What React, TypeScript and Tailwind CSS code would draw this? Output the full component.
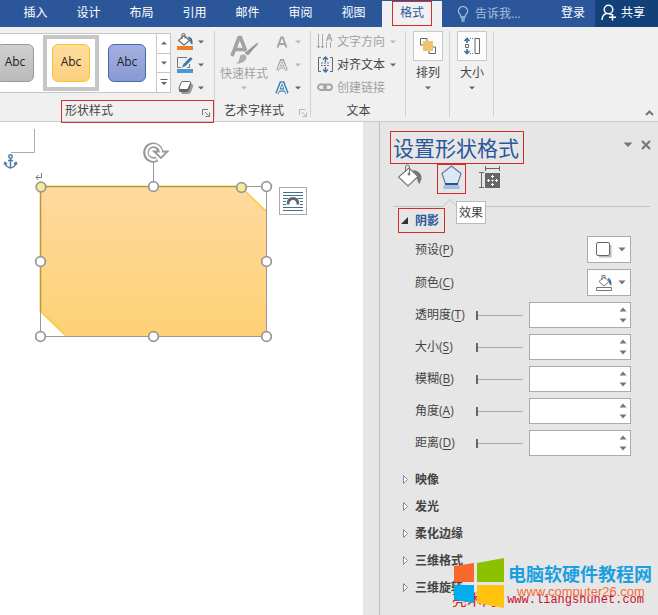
import { useState } from "react";
import type { ReactNode } from "react";

const menuTabs = ["插入", "设计", "布局", "引用", "邮件", "审阅", "视图"];

const sliderRows = [
  { id: "transparency", name: "透明度", hotkey: "T" },
  { id: "size", name: "大小", hotkey: "S" },
  { id: "blur", name: "模糊", hotkey: "B" },
  { id: "angle", name: "角度", hotkey: "A" },
  { id: "distance", name: "距离", hotkey: "D" },
];

const collapsedSections = ["映像", "发光", "柔化边缘", "三维格式", "三维旋转"];

function Caret({ className = "text-[#666666]" }: { className?: string }) {
  return (
    <svg width="6" height="4" viewBox="0 0 6 4" className={`shrink-0 ${className}`} aria-hidden="true">
      <path d="M0 0.500h6L3 3.500z" fill="currentColor" />
    </svg>
  );
}

function SpinArrow({ up = false }: { up?: boolean }) {
  return (
    <svg width="8" height="5" viewBox="0 0 8 5" className="shrink-0 text-[#777]" aria-hidden="true">
      <path d={up ? "M0.500 4.500h7L4 0.500z" : "M0.500 0.500h7L4 4.500z"} fill="currentColor" />
    </svg>
  );
}

function Launcher({ className }: { className: string }) {
  return (
    <svg width="8" height="8" viewBox="0 0 8 8" className={className} fill="none" stroke="currentColor" aria-hidden="true">
      <path d="M0.500 6V0.500H6M3 3l3.500 3.500M7.500 3.500v4h-4" />
    </svg>
  );
}

function BucketIcon({ bar }: { bar: string }) {
  return (
    <svg width="18" height="17" viewBox="0 0 18 17" fill="none" aria-hidden="true">
      <path d="M8 2.500l5.500 5-5.500 4.500L2.500 7.500z" fill="#fff" stroke="#666" strokeWidth="1.100" />
      <path d="M6 6V1.500q0-1 1.500-1T9 1.500v4" stroke="#666" />
      <path d="M11.500 3.500q5 0.500 5 5v3q-2.500-0.500-2.500-4z" fill="#44719c" />
      <path d="M1 13h16v4H1z" fill={bar} />
    </svg>
  );
}

function PencilIcon() {
  return (
    <svg width="18" height="17" viewBox="0 0 18 17" fill="none" aria-hidden="true">
      <path d="M11 1.500H1.500v10H5M13.500 8v3.500H11" stroke="#777" />
      <path d="M14.500 1l2 2-7 7-3.500 1.500L7.500 8z" fill="#3f76ad" />
      <path d="M1 13h16v4H1z" fill="#4a98d3" />
    </svg>
  );
}

function EffectIcon() {
  return (
    <svg width="17" height="15" viewBox="0 0 17 15" fill="none" aria-hidden="true">
      <path d="M3 10l2 4h6q2 0 3-2l2-5q0.500-3-2-4z" fill="#9a9a9a" />
      <path d="M6 1.500h6.500q1.500 0 1 1.500L11.500 8q-0.500 1.500-2 1.500H3q-1.500 0-1-1.500L4 3q0.500-1.500 2-1.500z" fill="#fff" stroke="#666" />
      <path d="M2 8.500q0 1 1.500 1h6q2 0 2.500-1.500L13.800 3v2.500L12 10q-0.500 2-2.500 2h-6Q2 12 2 10.500z" fill="#666" />
    </svg>
  );
}

function LetterIcon({ kind }: { kind: "solid" | "outline" | "glow" }) {
  if (kind === "glow") {
    return (
      <svg width="14" height="14" viewBox="0 0 14 14" fill="none" aria-hidden="true">
        <path d="M2 12.500L6 2h2l4 10.500M4 9h6" stroke="#9bd0ee" strokeWidth="4" />
        <path d="M2 12.500L6 2h2l4 10.500M4 9h6" stroke="#35709b" strokeWidth="3" />
        <path d="M2.300 12.500L6.300 2h1.400l4 10.500M4 9h6" stroke="#fff" strokeWidth="1.200" />
      </svg>
    );
  }
  return (
    <svg width="12" height="12" viewBox="0 0 12 12" fill="none" aria-hidden="true">
      <path d="M1.500 11.500L5.200 1.500h1.600l3.700 10M3 8h6" stroke="#a3a3a3" strokeWidth={kind === "solid" ? 1.9 : 2.8} />
      {kind === "outline" && <path d="M1.600 11L5.500 2h1l3.900 9M3 8h6" stroke="#f5f5f5" strokeWidth="1" />}
    </svg>
  );
}

function QuickStyleIcon() {
  return (
    <svg width="30" height="31" viewBox="0 0 30 31" fill="none" aria-hidden="true">
      <path d="M3 21L10 2.500h1.500L18 19M6 14.500h10" stroke="#a3a3a3" strokeWidth="3.600" />
      <path d="M28.500 7l1 2L19 21l-4-3z" fill="#999" stroke="#f0f0f0" strokeWidth="1" />
      <path d="M13 19q5-0.500 5 4-2 6-12 6.500 4-3 4-6 0-4 3-4.500z" fill="#adadad" stroke="#f0f0f0" />
    </svg>
  );
}

function TextDirectionIcon() {
  return (
    <svg width="17" height="17" viewBox="0 0 17 17" fill="none" stroke="#aaa" aria-hidden="true">
      <path d="M1.500 1v14M5.500 1v14M9.500 9v6M13.500 9v6" />
      <path d="M9.500 8L12 1.500h0.500L15 8M10.500 5.500h4" strokeWidth="1.400" />
      <path d="M0 13l1.500 2L3 13M4 13l1.500 2L7 13" />
    </svg>
  );
}

function AlignTextIcon() {
  return (
    <svg width="17" height="17" viewBox="0 0 17 17" fill="none" aria-hidden="true">
      <path d="M4 1.500H1.500v14H4M13 1.500h2.500v14H13" stroke="#666" />
      <path d="M4 7h9M4 9.500h9" stroke="#777" strokeDasharray="2 1" />
      <path d="M8.500 1v5M8.500 11v5M6 3.500L8.500 1 11 3.500M6 13.500L8.500 16l2.500-2.500" stroke="#3972a5" strokeWidth="1.400" />
    </svg>
  );
}

function LinkIcon() {
  return (
    <svg width="17" height="9" viewBox="0 0 17 9" fill="none" stroke="#a3a3a3" strokeWidth="1.800" aria-hidden="true">
      <rect x="1" y="1.500" width="8" height="5.500" rx="2.700" />
      <rect x="7" y="1.500" width="8" height="5.500" rx="2.700" />
    </svg>
  );
}

function ArrangeIcon() {
  return (
    <svg width="18" height="18" viewBox="0 0 18 18" fill="none" aria-hidden="true">
      <path d="M8 1.500H1.500V8M4 8H1.500M8 1.500V4M10 16.500h6.500V10M14 10h2.500M10 14v2.500" stroke="#666" />
      <path d="M4 4h10v10H4z" fill="#f0c36d" />
    </svg>
  );
}

function SizeIcon() {
  return (
    <svg width="18" height="18" viewBox="0 0 18 18" fill="none" aria-hidden="true">
      <path d="M12 1.500h4.500v15H12z" stroke="#666" />
      <path d="M2.500 7.500h3v3h-3z" stroke="#666" />
      <path d="M7 1.500h4M7 16.500h4" stroke="#777" strokeDasharray="1 1" />
      <path d="M4 1v5M4 12v5M1.500 4L4 1.500 6.500 4M1.500 14L4 16.500 6.500 14" stroke="#3972a5" strokeWidth="1.600" />
    </svg>
  );
}

function SplitTool({ label, icon, faded = false }: { label: string; icon: ReactNode; faded?: boolean }) {
  return (
    <button type="button" aria-label={label} className="flex h-[23px] items-center gap-[3px]">
      <span className="flex w-5 justify-center">{icon}</span>
      <Caret className={faded ? "text-[#b8b8b8]" : "text-[#666666]"} />
    </button>
  );
}

function StyleTile({ label, selected = false, className }: { label: string; selected?: boolean; className: string }) {
  return (
    <button
      type="button"
      aria-label={label}
      className={`flex size-14 shrink-0 items-center justify-center border-4 ${selected ? "border-[#c6c6c6] bg-white" : "border-transparent"}`}
    >
      <span className={`flex h-[38px] w-[38px] items-center justify-center rounded-[6px] border pb-[2px] text-[12px] leading-4 text-[#222] ${className}`}>
        Abc
      </span>
    </button>
  );
}

function MenuBar() {
  return (
    <nav className="flex h-[27px] items-stretch bg-[#2b579a] text-white">
      <div className="flex pl-[9px]">
        {menuTabs.map((tab) => (
          <button key={tab} type="button" className="w-[53px] pb-[2px]">
            {tab}
          </button>
        ))}
      </div>
      <button type="button" className="mt-px ml-[2px] flex w-[60px] justify-center bg-[#f0f0f0] text-[#2b579a]">
        <span className="flex h-[25px] w-10 items-center justify-center border border-[#d42a2a] pb-[2px]">格式</span>
      </button>
      <button type="button" className="ml-[15px] flex items-center gap-[6px] text-[#a9bedc]">
        <svg width="12" height="16" viewBox="0 0 12 16" fill="none" stroke="currentColor" strokeWidth="1.300" aria-hidden="true">
          <path d="M4 11q0-2-1.500-3.200A4.500 4.500 0 1 1 9.500 7.800Q8 9 8 11zM4 13h4M4.500 15h3" />
        </svg>
        告诉我...
      </button>
      <button type="button" className="ml-auto px-[10px] pb-[2px]">
        登录
      </button>
      <button type="button" className="flex w-[63px] items-center gap-[4px] bg-[#124078] pb-[2px] pl-[6px]">
        <svg width="16" height="17" viewBox="0 0 16 17" fill="none" stroke="currentColor" strokeWidth="1.500" aria-hidden="true">
          <circle cx="7.500" cy="5.500" r="4.300" />
          <path d="M1 16q0-5 4.500-6.500M8.500 9.500l2 1.500M11.500 10v6.500M8 13.300h7" />
        </svg>
        共享
      </button>
    </nav>
  );
}

function Group({ children, label, className = "" }: { children: ReactNode; label?: ReactNode; className?: string }) {
  return (
    <section className={`relative flex shrink-0 flex-col pt-[3px] after:absolute after:top-1 after:right-0 after:bottom-1 after:w-px after:bg-[#d2d2d2] ${className}`}>
      <div className="flex h-[69px]">{children}</div>
      <div className="mt-px flex h-[21px] items-center">{label}</div>
    </section>
  );
}

function LargeTool({ label, icon }: { label: string; icon: ReactNode }) {
  return (
    <button type="button" className="mt-px flex w-full flex-col items-center">
      <span className="flex size-[30px] items-center justify-center border border-[#c9c9c9] bg-[#fcfcfc]">{icon}</span>
      <span className="mt-1 leading-4">{label}</span>
      <Caret className="mt-[5px] text-[#666666]" />
    </button>
  );
}

function Ribbon() {
  return (
    <div className="flex border-b border-[#cacaca] bg-[#f0f0f0] text-[#444]">
      <Group
        className="w-[215px]"
        label={
          <div className="relative z-10 mt-[2px] ml-[61px] flex h-[23px] w-[153px] shrink-0 items-center justify-between border border-[#cf3030] px-[3px] pb-px">
            <span>形状样式</span>
            <button type="button" aria-label="形状样式设置" className="mt-1">
              <Launcher className="text-[#777]" />
            </button>
          </div>
        }
      >
        <div className="mt-[3px] flex h-[60px] w-[171px] border border-l-0 border-[#c6c6c6] bg-white">
          <div className="flex w-[156px] items-center overflow-hidden">
            <div className="-ml-[13px] flex">
              <StyleTile label="灰色样式" className="border-[#999] bg-linear-to-b from-[#d0d0d0] to-[#bababa]" />
              <StyleTile label="金色样式" selected className="border-[#f8c52c] bg-linear-to-b from-[#ffdc9e] to-[#fdd080]" />
              <StyleTile label="蓝色样式" className="border-[#4169b8] bg-linear-to-b from-[#a3b1df] to-[#8899d4]" />
            </div>
          </div>
          <div className="flex flex-1 flex-col divide-y divide-[#c6c6c6] border-l border-[#c6c6c6] text-[#666]">
            <button type="button" aria-label="上一行" className="flex flex-1 items-center justify-center">
              <Caret className="rotate-180 text-[#666666]" />
            </button>
            <button type="button" aria-label="下一行" className="flex flex-1 items-center justify-center">
              <Caret />
            </button>
            <button type="button" aria-label="其他" className="flex flex-1 items-center justify-center">
              <svg width="8" height="7" viewBox="0 0 8 7" aria-hidden="true">
                <path d="M0.500 0h7v1h-7zM1 3h6L4 6z" fill="currentColor" />
              </svg>
            </button>
          </div>
        </div>
        <div className="ml-[4px] flex flex-col">
          <SplitTool label="形状填充" icon={<BucketIcon bar="#e97d2f" />} />
          <SplitTool label="形状轮廓" icon={<PencilIcon />} />
          <SplitTool label="形状效果" icon={<EffectIcon />} />
        </div>
      </Group>

      <Group
        className="w-24"
        label={
          <div className="flex flex-1 items-center justify-between pr-[4px] pl-[9px]">
            <span>艺术字样式</span>
            <button type="button" aria-label="艺术字样式设置" className="mt-1">
              <Launcher className="text-[#b5b5b5]" />
            </button>
          </div>
        }
      >
        <button type="button" className="ml-[5px] flex w-12 flex-col items-center pt-[5px] text-[#a0a0a0]">
          <QuickStyleIcon />
          <span className="leading-4">快速样式</span>
          <Caret className="mt-1 text-[#b8b8b8]" />
        </button>
        <div className="ml-1 flex flex-col">
          <SplitTool label="文本填充" faded icon={<LetterIcon kind="solid" />} />
          <SplitTool label="文本轮廓" faded icon={<LetterIcon kind="outline" />} />
          <SplitTool label="文本效果" icon={<LetterIcon kind="glow" />} />
        </div>
      </Group>

      <Group className="w-[95px]" label={<span className="flex-1 text-center">文本</span>}>
        <div className="ml-[6px] flex flex-col">
          <button type="button" className="flex h-[23px] items-center gap-[3px] text-[#a0a0a0]">
            <TextDirectionIcon />
            文字方向
            <Caret className="ml-[2px] text-[#b8b8b8]" />
          </button>
          <button type="button" className="flex h-[23px] items-center gap-[3px]">
            <AlignTextIcon />
            对齐文本
            <Caret className="ml-[2px] text-[#666666]" />
          </button>
          <button type="button" className="flex h-[23px] items-center gap-[3px] text-[#a0a0a0]">
            <LinkIcon />
            创建链接
          </button>
        </div>
      </Group>

      <Group className="w-11">
        <LargeTool label="排列" icon={<ArrangeIcon />} />
      </Group>
      <Group className="w-11">
        <LargeTool label="大小" icon={<SizeIcon />} />
      </Group>

      <button type="button" aria-label="折叠功能区" className="mr-1 mb-[5px] ml-auto self-end">
        <svg width="9" height="6" viewBox="0 0 9 6" fill="none" stroke="#777" strokeWidth="2" aria-hidden="true">
          <path d="M1 5l3.500-3.500L8 5" />
        </svg>
      </button>
    </div>
  );
}

const handles = [
  [153, 64],
  [266, 64],
  [40, 139],
  [266, 139],
  [40, 214],
  [153, 214],
  [266, 214],
];

function DocumentCanvas() {
  return (
    <main className="relative min-w-0 flex-1 overflow-hidden bg-white">
      <svg width="320" height="240" viewBox="0 0 320 240" fill="none" role="img" aria-label="剪去对角的矩形">
        <defs>
          <linearGradient id="gold" x1="0" y1="0" x2="0" y2="1">
            <stop offset="0" stopColor="#ffd99f" />
            <stop offset="1" stopColor="#fed175" />
          </linearGradient>
        </defs>
        <path d="M34.500 7v23.500H11" stroke="#aaa" />
        <g stroke="#4d7da6" strokeWidth="1.500">
          <circle cx="10.500" cy="34.500" r="1.700" />
          <path d="M10.500 36v10M8 38.500h5M5 40.500q0.500 4.500 5.500 5.500 5-1 5.500-5.500M4 42.500l1-2 2 1.500M14 42l2-1.500 1 2" />
        </g>
        <path d="M41.500 51v4.500h-5.500M38.500 53L36 55.500l2.500 2.500" stroke="#777" />
        <path d="M41 65h200l26 25v124H66l-25-24z" fill="url(#gold)" />
        <path d="M241 65l26 25M41 190l25 24" stroke="#f6cd3c" strokeWidth="1.500" />
        <path d="M40.500 64.500h226v150h-226zM153.500 64V40" stroke="#999" />
        <path d="M40.500 190V64.500H241" stroke="#b69a2b" strokeWidth="1.500" />
        <path d="M160.500 30A7.300 7.300 0 1 0 157 36.800" stroke="#999" strokeWidth="5.600" />
        <path d="M154 29.500h13.500L161 36z" fill="#fff" stroke="#999" strokeWidth="1.800" />
        <path d="M161 31A7.300 7.300 0 1 0 156.500 37.200" stroke="#fff" strokeWidth="2.200" />
        {handles.map(([x, y]) => (
          <circle key={`${x}-${y}`} cx={x + 0.5} cy={y + 0.5} r="4.800" fill="#fff" stroke="#999" strokeWidth="1.800" />
        ))}
        <circle cx="41" cy="65" r="4.800" fill="#f9eb93" stroke="#999" strokeWidth="1.800" />
        <circle cx="241.500" cy="65.500" r="4.800" fill="#f9eb93" stroke="#999" strokeWidth="1.800" />
      </svg>
      <button
        type="button"
        aria-label="布局选项"
        className="absolute top-[65px] left-[279px] flex size-7 items-center justify-center border border-[#aaa] bg-white"
      >
        <svg width="20" height="20" viewBox="0 0 20 20" fill="none" aria-hidden="true">
          <path d="M0 1.500h20M0 4.500h20M0 7.500h5M15 7.500h5M0 10.500h3M17 10.500h3M0 13.500h3M17 13.500h3M0 16.500h20M0 19.500h20" stroke="#43728f" />
          <path d="M5 13.500q0-6 5-6t5 6" stroke="#666" strokeWidth="2.800" />
        </svg>
      </button>
    </main>
  );
}

function PaneTabs() {
  return (
    <div className="flex h-[30px] items-start">
      <button type="button" aria-label="填充与线条" className="ml-[5px]">
        <svg width="26" height="26" viewBox="0 0 26 26" fill="none" aria-hidden="true">
          <path d="M16 6q8 2 7.500 9l-2 5q-2.500-2-2.500-7l-5-5z" fill="#777" />
          <path d="M11 4l9 8.500-10 9.500-9.500-9z" fill="#fff" stroke="#777" strokeWidth="1.200" />
          <path d="M7.500 8V3q0-2 2-2t2 2v6" stroke="#777" />
          <circle cx="11" cy="10" r="1.500" fill="#777" />
        </svg>
      </button>
      <button type="button" aria-label="效果" className="ml-[13px] flex h-[30px] w-[29px] items-start justify-center border border-[#d42a2a]">
        <svg width="23" height="26" viewBox="0 0 23 26" fill="none" aria-hidden="true">
          <path d="M4 20h15l1 4H3z" fill="#a6bedf" />
          <path d="M11.500 1l9.500 7.500-3.500 10.500h-12L2 8.500z" fill="#dbe8f8" stroke="#647b9d" strokeWidth="1.200" />
          <path d="M5 19h13" stroke="#29548c" strokeWidth="2" />
        </svg>
      </button>
      <button type="button" aria-label="布局属性" className="mt-[2px] ml-[13px]">
        <svg width="21" height="23" viewBox="0 0 21 23" fill="none" aria-hidden="true">
          <path d="M0 6.500h5M2.500 7v14M0 21.500h5M6 2.500h15M6.500 0v5M20.500 0v5" stroke="#666" />
          <path d="M6 7h15v15H6z" fill="#666" />
          <path d="M13.500 9v3M13.500 17v3M8 14.500h3M16 14.500h3M13.500 13.500v2M12.500 14.500h2M12 11l1.500-1.500L15 11M12 18l1.500 1.500L15 18M10 13l-1.500 1.500L10 16M17 13l1.500 1.500L17 16" stroke="#fff" />
        </svg>
      </button>
    </div>
  );
}

function SliderRow({ id, name, hotkey }: { id: string; name: string; hotkey: string }) {
  const [value, setValue] = useState("");
  const step = (delta: number) => setValue(String(Math.min(100, Math.max(0, Number(value || 0) + delta))));
  return (
    <div className="flex h-8 items-center">
      <label htmlFor={id} className="w-[61px]">
        {name}(<u className="underline-offset-2">{hotkey}</u>)
      </label>
      <input
        type="range"
        aria-label={name}
        min={0}
        max={100}
        value={Number(value || 0)}
        onChange={(e) => setValue(e.target.value)}
        className="h-3 w-[47px] appearance-none bg-[linear-gradient(#aaa,#aaa)] bg-[length:100%_1px] bg-center bg-no-repeat [&::-webkit-slider-thumb]:h-[9px] [&::-webkit-slider-thumb]:w-[2px] [&::-webkit-slider-thumb]:appearance-none [&::-webkit-slider-thumb]:bg-[#666]"
      />
      <div className="ml-auto flex h-[26px] w-[102px] border border-[#ababab] bg-white">
        <input
          id={id}
          type="text"
          value={value}
          onChange={(e) => setValue(e.target.value)}
          className="min-w-0 flex-1 bg-transparent px-1 outline-none"
        />
        <div className="flex w-[14px] flex-col py-px">
          <button type="button" aria-label={`增大${name}`} onClick={() => step(1)} className="flex flex-1 items-center justify-center">
            <SpinArrow up />
          </button>
          <button type="button" aria-label={`减小${name}`} onClick={() => step(-1)} className="flex flex-1 items-center justify-center">
            <SpinArrow />
          </button>
        </div>
      </div>
    </div>
  );
}

function DropRow({ id, name, hotkey, children }: { id: string; name: string; hotkey: string; children: ReactNode }) {
  return (
    <div className="flex h-[33px] items-center justify-between">
      <label htmlFor={id}>
        {name}(<u className="underline-offset-2">{hotkey}</u>)
      </label>
      <button id={id} type="button" className="flex h-[27px] w-11 items-center justify-between border border-[#ababab] bg-[#fdfdfd] pr-[4px] pl-[7px]">
        {children}
        <SpinArrow />
      </button>
    </div>
  );
}

function FormatPane() {
  return (
    <aside className="w-[279px] shrink-0 border-l border-[#bdbdbd] pt-2 text-[#444]">
      <header className="flex items-start pl-[10px]">
        <h2 className="mt-px flex h-[33px] w-[134px] items-center border border-[#d42a2a] pl-[2px] text-[21px] leading-[30px] text-[#2b579a]">
          设置形状格式
        </h2>
        <div className="mt-[10px] mr-[7px] ml-auto flex items-center gap-2">
          <button type="button" aria-label="任务窗格选项">
            <svg width="10" height="6" viewBox="0 0 10 6" className="block" aria-hidden="true">
              <path d="M0.500 0.500h9L5 5z" fill="#777" />
            </svg>
          </button>
          <button type="button" aria-label="关闭">
            <svg width="10" height="10" viewBox="0 0 10 10" className="block" stroke="#777" strokeWidth="2.200" aria-hidden="true">
              <path d="M1 1l8 8M9 1L1 9" />
            </svg>
          </button>
        </div>
      </header>
      <div className="relative mr-2 ml-[13px] border-b border-[#c3c3c3] pb-[12px]">
        <PaneTabs />
        <svg width="14" height="8" viewBox="0 0 14 8" className="absolute -bottom-px left-[50px]" aria-hidden="true">
          <path d="M0 8l7-7 7 7z" fill="#e6e6e6" />
          <path d="M0 7.500L7 0.500l7 7" fill="none" stroke="#c3c3c3" />
        </svg>
        <span role="tooltip" className="absolute top-[37px] left-[63px] flex h-[23px] w-[30px] items-center justify-center border border-[#bbb] bg-white">
          效果
        </span>
      </div>
      <button
        type="button"
        aria-expanded="true"
        className="mt-px ml-[18px] flex h-[25px] w-[47px] items-center gap-[7px] border border-[#d42a2a] pl-[2px] font-bold text-[#2b579a]"
      >
        <svg width="7" height="7" viewBox="0 0 7 7" aria-hidden="true">
          <path d="M7 0v7H0z" fill="#333" />
        </svg>
        阴影
      </button>
      <div className="mr-[27px] ml-[35px]">
        <DropRow id="preset" name="预设" hotkey="P">
          <svg width="17" height="17" viewBox="0 0 17 17" fill="none" aria-hidden="true">
            <path d="M4 15.500h11.500V4" stroke="#bbb" strokeWidth="2" />
            <rect x="1.500" y="1.500" width="13" height="13" rx="1.500" fill="#fff" stroke="#666" />
          </svg>
        </DropRow>
        <DropRow id="color" name="颜色" hotkey="C">
          <svg width="18" height="17" viewBox="0 0 18 17" fill="none" aria-hidden="true">
            <path d="M9 3l5 4.500-5 4.500-5-4.500z" fill="#fff" stroke="#777" />
            <path d="M7 6V1.500h3V5" stroke="#777" />
            <path d="M12.500 4q4.500 0 4 7.500-2.500-0.500-2.500-4z" fill="#44719c" />
            <path d="M1.500 13.500h15v3h-15z" fill="#fff" stroke="#777" />
          </svg>
        </DropRow>
        {sliderRows.map((row) => (
          <SliderRow key={row.id} {...row} />
        ))}
      </div>
      <div className="mt-[7px] ml-[23px] flex flex-col items-start pb-[14px]">
        {collapsedSections.map((name) => (
          <button key={name} type="button" aria-expanded="false" className="flex h-[27px] items-center gap-[7px] font-bold">
            <svg width="5" height="9" viewBox="0 0 5 9" fill="#fff" stroke="#888" aria-hidden="true">
              <path d="M0.500 0.500l4 4-4 4z" />
            </svg>
            {name}
          </button>
        ))}
      </div>
    </aside>
  );
}

function SiteBadge() {
  return (
    <div className="pointer-events-none absolute right-[6px] bottom-[5px] h-[54px] w-[200px]">
      <span className="absolute bottom-0 left-0 font-['Liberation_Serif','Noto_Sans_CJK_SC',serif] text-[15px] leading-5 text-[#d71920]">亮术网</span>
      <span className="absolute right-[8px] bottom-[2px] font-['Liberation_Mono',monospace] text-[12px] leading-4 text-[#c8102e]">
        www.liangshunet.com
      </span>
      <svg width="50" height="50" viewBox="0 0 50 50" className="absolute bottom-[2px] left-[2px]" aria-hidden="true">
        <path d="M0 8l20-3v19H0z" fill="#f8682c" />
        <path d="M23 5l27-5v24H23z" fill="#8cc100" />
        <path d="M0 27h20v18L0 42z" fill="#00adef" />
        <path d="M23 27h27v23l-27-5z" fill="#ffc20e" />
      </svg>
      <span className="absolute top-[6px] left-[56px] text-[18px] leading-6 font-bold whitespace-nowrap text-[#1a9fe0]">电脑软硬件教程网</span>
      <span className="absolute top-[28px] left-[65px] font-['Liberation_Sans',sans-serif] text-[13px] leading-4 font-medium text-[#f26b38]">
        www.computer26.com
      </span>
    </div>
  );
}

export default function App() {
  return (
    <div className="relative flex min-h-screen flex-col bg-[#e6e6e6] font-['Open_Sans','Noto_Sans_CJK_SC',sans-serif] text-[12px] leading-4 whitespace-nowrap">
      <MenuBar />
      <Ribbon />
      <div className="flex flex-1 gap-4">
        <DocumentCanvas />
        <FormatPane />
      </div>
      <SiteBadge />
    </div>
  );
}
